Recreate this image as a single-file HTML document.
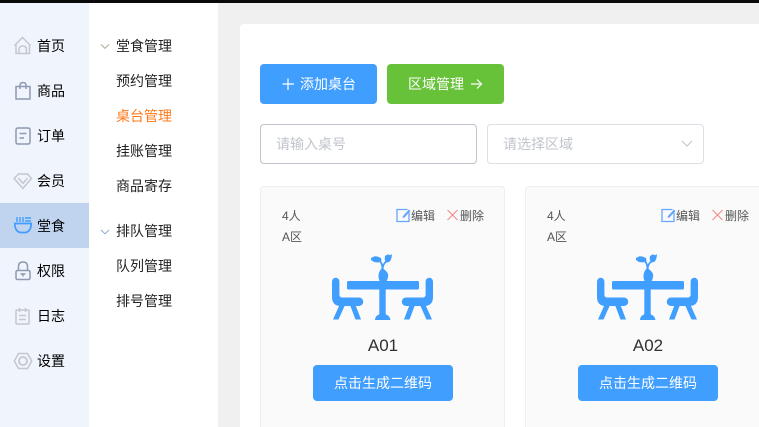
<!DOCTYPE html>
<html><head><meta charset="utf-8"><style>
*{box-sizing:border-box;margin:0;padding:0}
html,body{width:759px;height:427px;overflow:hidden;background:#f0f0f0;font-family:"Liberation Sans","Noto Sans CJK SC",sans-serif;font-size:14px}
.a{position:absolute;white-space:nowrap}
.side{left:0;top:3px;width:89px;height:424px;background:#f0f4fd}
.sub{left:89px;top:3px;width:129px;height:424px;background:#fff}
.top{left:0;top:0;width:759px;height:3px;background:#0a0a0a}
.panel{left:240px;top:24px;width:519px;height:403px;background:#fff;border-radius:4px 0 0 0}
.m{left:37px;font-size:14px;line-height:20px;color:#000}
.s{left:116px;font-size:14px;line-height:20px;color:#222}
.btn{border-radius:4px;color:#fff;font-size:14px;line-height:40px;height:40px;width:117px}
.inp{top:124px;height:40px;width:217px;border-radius:4px;background:#fff;font-size:14px;line-height:38px;padding-left:15px;color:#c0c4cc}
.card{top:186px;width:245px;height:241px;background:#fafafa;border:1px solid #ebeef5;border-bottom:0;border-radius:4px 4px 0 0}
.t{font-size:12px;line-height:16px;color:#555}
.qr{top:365px;width:140px;height:36px;line-height:36px;background:#409eff;border-radius:4px;color:#fff;text-align:center;font-size:14px}
.nm{top:336px;width:140px;text-align:center;font-size:17px;line-height:20px;color:#303133}
svg{position:absolute;left:0;top:0;overflow:visible}
</style></head><body>
<div class="a top"></div><div class="a side"></div><div class="a sub"></div><div class="a panel"></div>
<div class="a" style="left:0;top:203px;width:89px;height:45px;background:#c0d4f0"></div>
<div class="a m" style="top:36px">首页</div>
<div class="a m" style="top:81px">商品</div>
<div class="a m" style="top:126px">订单</div>
<div class="a m" style="top:171px">会员</div>
<div class="a m" style="top:216px">堂食</div>
<div class="a m" style="top:261px">权限</div>
<div class="a m" style="top:306px">日志</div>
<div class="a m" style="top:351px">设置</div>
<div class="a s" style="top:36px">堂食管理</div>
<div class="a s" style="top:71px">预约管理</div>
<div class="a s" style="top:106px;color:#ff7a1a">桌台管理</div>
<div class="a s" style="top:141px">挂账管理</div>
<div class="a s" style="top:176px">商品寄存</div>
<div class="a s" style="top:221px">排队管理</div>
<div class="a s" style="top:256px">队列管理</div>
<div class="a s" style="top:291px">排号管理</div>
<div class="a btn" style="left:260px;top:64px;background:#409eff;padding-left:40px">添加桌台</div>
<div class="a btn" style="left:387px;top:64px;background:#67c23a;padding-left:21px">区域管理</div>
<div class="a inp" style="left:260px;border:1px solid #c0c4cc">请输入桌号</div>
<div class="a inp" style="left:487px;border:1px solid #dcdfe6">请选择区域</div>
<div class="a card" style="left:260px"></div><div class="a card" style="left:525px"></div>
<div class="a t" style="left:282px;top:208px">4人</div><div class="a t" style="left:282px;top:229px">A区</div>
<div class="a t" style="left:411px;top:208px">编辑</div><div class="a t" style="left:460px;top:208px">删除</div>
<div class="a t" style="left:547px;top:208px">4人</div><div class="a t" style="left:547px;top:229px">A区</div>
<div class="a t" style="left:676px;top:208px">编辑</div><div class="a t" style="left:725px;top:208px">删除</div>
<div class="a nm" style="left:313px">A01</div><div class="a nm" style="left:578px">A02</div>
<div class="a qr" style="left:313px">点击生成二维码</div><div class="a qr" style="left:578px">点击生成二维码</div>
<svg width="759" height="427" fill="none">
<defs><g id="tb">
<g fill="#409eff">
<rect x="347" y="281" width="72" height="8.500" rx="1.500"/><rect x="379.300" y="285" width="6.400" height="30"/>
<path d="M375 320q0-4 4-5.500l1-2h5l1 2q4 1.500 4.500 5.500zM379.500 281q-1.500-4-.800-7t2-4.500l1.800-1.800 1.800 1.800q2.700 2 3.600 4.500t-1.200 7z"/>
<path d="M332 281.500a3.700 3.700 0 0 1 7.400 0v13q0 3 3 3h16.600a4.200 4.200 0 0 1 0 8.500H341q-9 0-9-9z"/>
<path d="M339.500 305h5.500l-6.500 14.500h-5.500zM350 305h5.500l5.500 14.500h-5.500z"/>
<path d="M433 281.500a3.700 3.700 0 0 0-7.400 0v13q0 3-3 3h-16.600a4.200 4.200 0 0 0 0 8.500H424q9 0 9-9z"/>
<path d="M425.500 305h-5.500l6.500 14.500h5.500zM415 305h-5.500l-5.500 14.500h5.500z"/>
<path d="M371 258l3.500-1.800 3 .3 3.500 1.500.5 3-3.500 1.500-4-.5-3-2zM385 256l3-1.800 1.700 1 2.300-1-.5 3.800-1.500 3.500-3.500 1.200-1.800-3.200z"/>
</g>
<path d="M378.500 260q4 2.500 4 9M386.500 261q-3.500 3-4 8" stroke="#409eff" stroke-width="1.800"/>
</g>
<g id="ac">
<path d="M407.500 209.500h-10.500v12h12v-9" stroke="#66a6ff" stroke-width="1.300"/>
<path d="M403 216l6-6.500 1.500 1.500-6 6.500-2 .5z" fill="#66a6ff"/>
<path d="M447.500 210l10 10M457.500 210l-10 10" stroke="#f78989" stroke-width="1.100"/>
</g></defs>
<use href="#tb"/><use href="#tb" x="265"/><use href="#ac"/><use href="#ac" x="265"/>
<g stroke="#c4c7cc" stroke-width="1.500">
<path d="M14.500 45.500l8-8 8 8M16 44v9.500h13.500V44M19 53.500v-4q0-3.500 3.700-3.500t3.700 3.500v4"/>
</g>
<g stroke="#8e9ab0" stroke-width="1.500">
<path d="M16 86.500h14v12.500h-14zM20 89v-3.500q0-3 3-3t3 3V89"/>
<path d="M18 128h10q2 0 2 2v12q0 2-2 2H18q-2 0-2-2v-12q0-2 2-2zM19.500 133.500h7M19.500 138h4.500"/>
<rect x="16" y="270.500" width="14" height="9" rx="1.500"/><path d="M18.500 270v-3.500q0-4.500 4.500-4.500t4.500 4.500v3.500M20.500 274h5M23 274v2.500"/>
</g>
<g stroke="#c4c7cc" stroke-width="1.500">
<path d="M18.500 174h9l4 4.500-8.700 10-8.700-10zM18.300 178.300l4.700 5 4.500-5"/>
<rect x="16" y="310" width="13" height="14" rx="1"/><path d="M19.500 308v4M25.500 308v4M19 315.500h7M19 319.500h7"/>
<path d="M18.500 353.500h9l4.200 7.500-4.200 7.500h-9l-4.200-7.500z"/><circle cx="23" cy="361" r="4" stroke-width="1.800"/>
</g>
<g stroke="#409eff" stroke-width="1.400">
<path d="M14.800 223.500h16.400q0 7.500-5.200 9h-6q-5.200-1.500-5.200-9z" stroke-width="1.700"/><path d="M17 222v-5M20 222v-5M23 222v-5M25 218h6M25 221h6"/>
</g>
<path d="M101 44.500l4 3.800 4-3.800" stroke="#ada595" stroke-width="1"/>
<path d="M101 230l4 3.800 4-3.800" stroke="#8fa9c9" stroke-width="1"/>
<path d="M682 141l5 5 5-5" stroke="#c0c4cc" stroke-width="1.100"/>
<path d="M288 78.500v11.500M282.500 84h11.500" stroke="#fff" stroke-width="1.200"/>
<path d="M471 84h10.500M477 79.500l4.500 4.500-4.500 4.500" stroke="#fff" stroke-width="1.200"/>
</svg>
</body></html>
